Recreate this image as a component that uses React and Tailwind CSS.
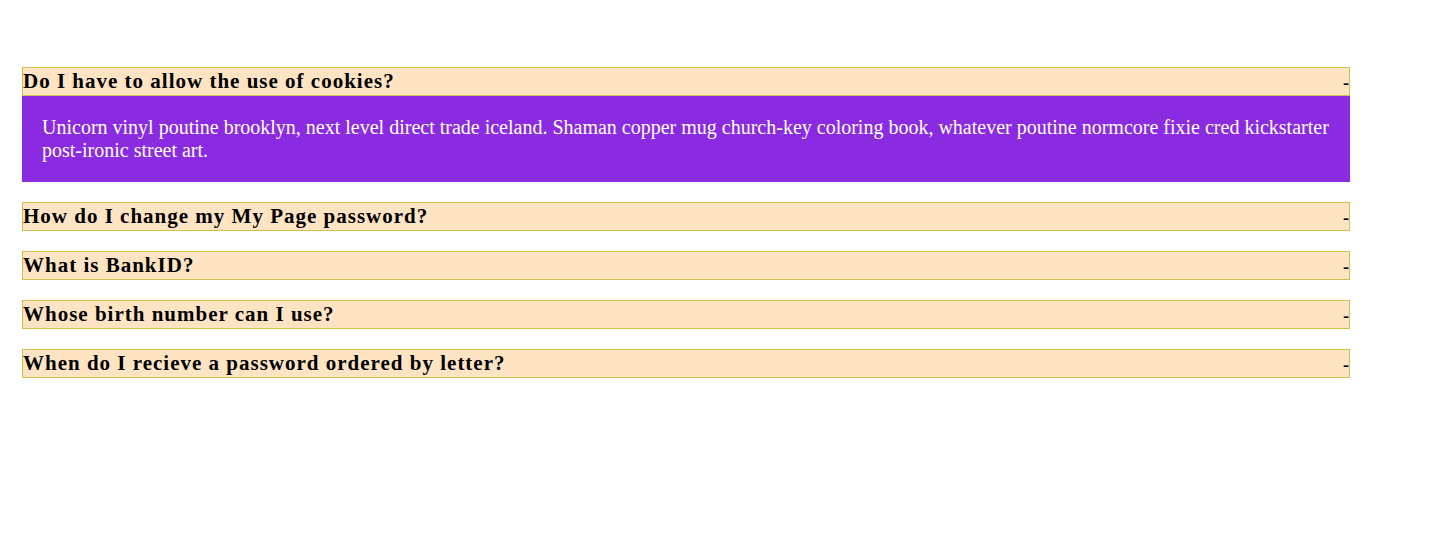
import React from "react";

const items = [
  {
    q: "Do I have to allow the use of cookies?",
    a: "Unicorn vinyl poutine brooklyn, next level direct trade iceland. Shaman copper mug church-key coloring book, whatever poutine normcore fixie cred kickstarter post-ironic street art.",
    open: true,
  },
  { q: "How do I change my My Page password?" },
  { q: "What is BankID?" },
  { q: "Whose birth number can I use?" },
  { q: "When do I recieve a password ordered by letter?" },
];

export default function App() {
  return (
    <div className="bg-white min-h-[557px] pt-[67px] pl-[22px] font-['Liberation_Serif',serif]">
      <div className="w-[1328px] flex flex-col">
        {items.map((it, i) => (
          <div key={i} className="mb-[20px]">
            <div className="flex justify-between items-center bg-[#ffe4c4] border border-[#d0c14a] py-[1px] text-[21px] leading-[25px] tracking-[1px] font-bold text-black">
              <span>{it.q}</span>
              <span className="tracking-normal text-[18px] leading-[25px] translate-y-[2px]">-</span>
            </div>
            {it.open && (
              <div className="bg-[#8a2be2] text-white text-[20px] leading-[23px] p-[20px]">
                {it.a}
              </div>
            )}
          </div>
        ))}
      </div>
    </div>
  );
}
